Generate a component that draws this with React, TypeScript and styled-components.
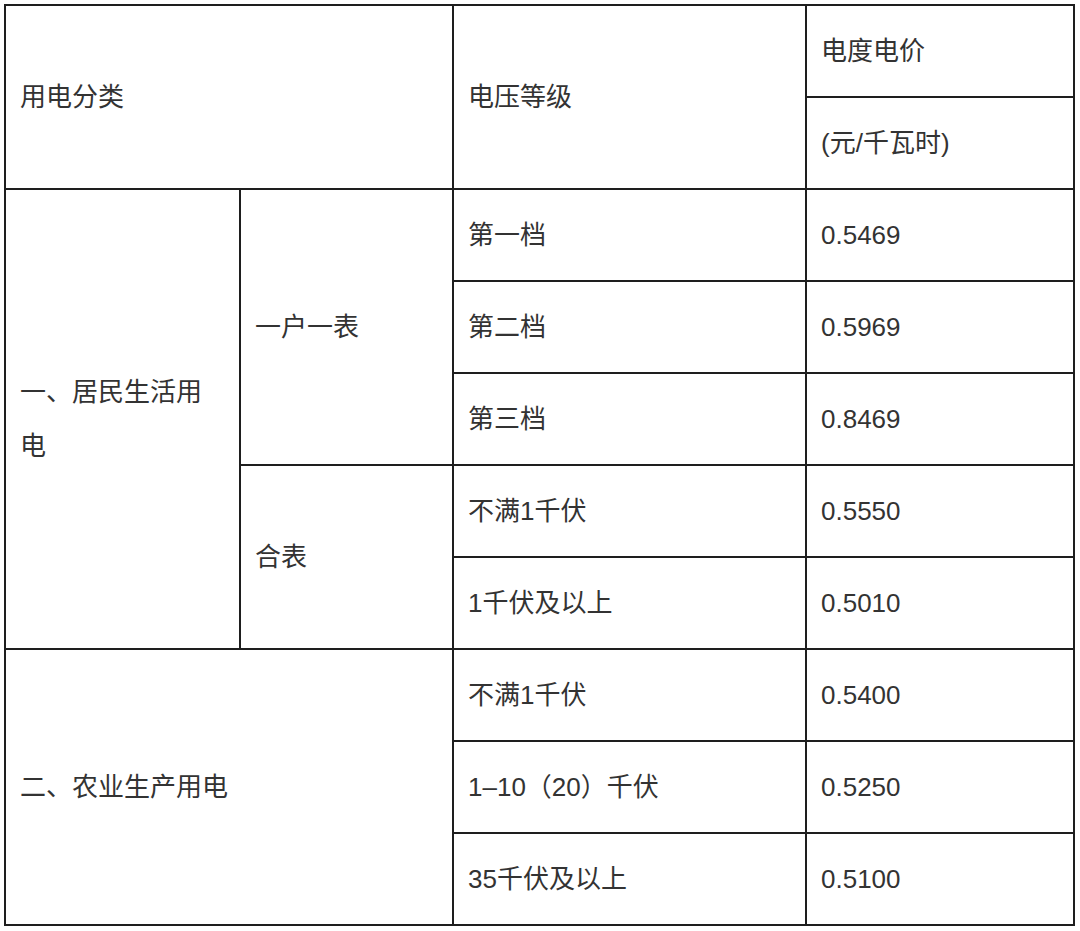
import React from "react";
import styled, { createGlobalStyle } from "styled-components";

const Global = createGlobalStyle`
  html, body { margin: 0; padding: 0; background: #ffffff; }
  body { font-family: "Liberation Sans", "Noto Sans CJK SC", sans-serif; }
`;

const Page = styled.div`
  padding: 4px;
  background: #ffffff;
`;

const Table = styled.div`
  display: grid;
  grid-template-columns: 233px 211px 351px 266px;
  grid-template-rows: repeat(10, 90px);
  gap: 2px;
  padding: 2px;
  width: 1071px;
  box-sizing: border-box;
  background: #1e1e1e;
`;

const Cell = styled.div<{ $row: number; $col: number; $rs?: number; $cs?: number }>`
  grid-row: ${(p) => p.$row} / span ${(p) => p.$rs ?? 1};
  grid-column: ${(p) => p.$col} / span ${(p) => p.$cs ?? 1};
  background: #ffffff;
  display: flex;
  align-items: center;
  padding: 0 14px;
  color: #333333;
  font-size: 26px;
  line-height: 54px;
  font-family: "Liberation Sans", "Noto Sans CJK SC", sans-serif;
`;

type Row = { volt: string; price: string };

const resident: Row[] = [
  { volt: "第一档", price: "0.5469" },
  { volt: "第二档", price: "0.5969" },
  { volt: "第三档", price: "0.8469" },
  { volt: "不满1千伏", price: "0.5550" },
  { volt: "1千伏及以上", price: "0.5010" },
];

const farm: Row[] = [
  { volt: "不满1千伏", price: "0.5400" },
  { volt: "1–10（20）千伏", price: "0.5250" },
  { volt: "35千伏及以上", price: "0.5100" },
];

export default function App() {
  return (
    <Page>
      <Global />
      <Table>
        <Cell $row={1} $col={1} $rs={2} $cs={2}>用电分类</Cell>
        <Cell $row={1} $col={3} $rs={2}>电压等级</Cell>
        <Cell $row={1} $col={4}>电度电价</Cell>
        <Cell $row={2} $col={4}>(元/千瓦时)</Cell>

        <Cell $row={3} $col={1} $rs={5}>一、居民生活用电</Cell>
        <Cell $row={3} $col={2} $rs={3}>一户一表</Cell>
        <Cell $row={6} $col={2} $rs={2}>合表</Cell>
        {resident.map((r, i) => (
          <React.Fragment key={"r" + i}>
            <Cell $row={3 + i} $col={3}>{r.volt}</Cell>
            <Cell $row={3 + i} $col={4}>{r.price}</Cell>
          </React.Fragment>
        ))}

        <Cell $row={8} $col={1} $rs={3} $cs={2}>二、农业生产用电</Cell>
        {farm.map((r, i) => (
          <React.Fragment key={"f" + i}>
            <Cell $row={8 + i} $col={3}>{r.volt}</Cell>
            <Cell $row={8 + i} $col={4}>{r.price}</Cell>
          </React.Fragment>
        ))}
      </Table>
    </Page>
  );
}
